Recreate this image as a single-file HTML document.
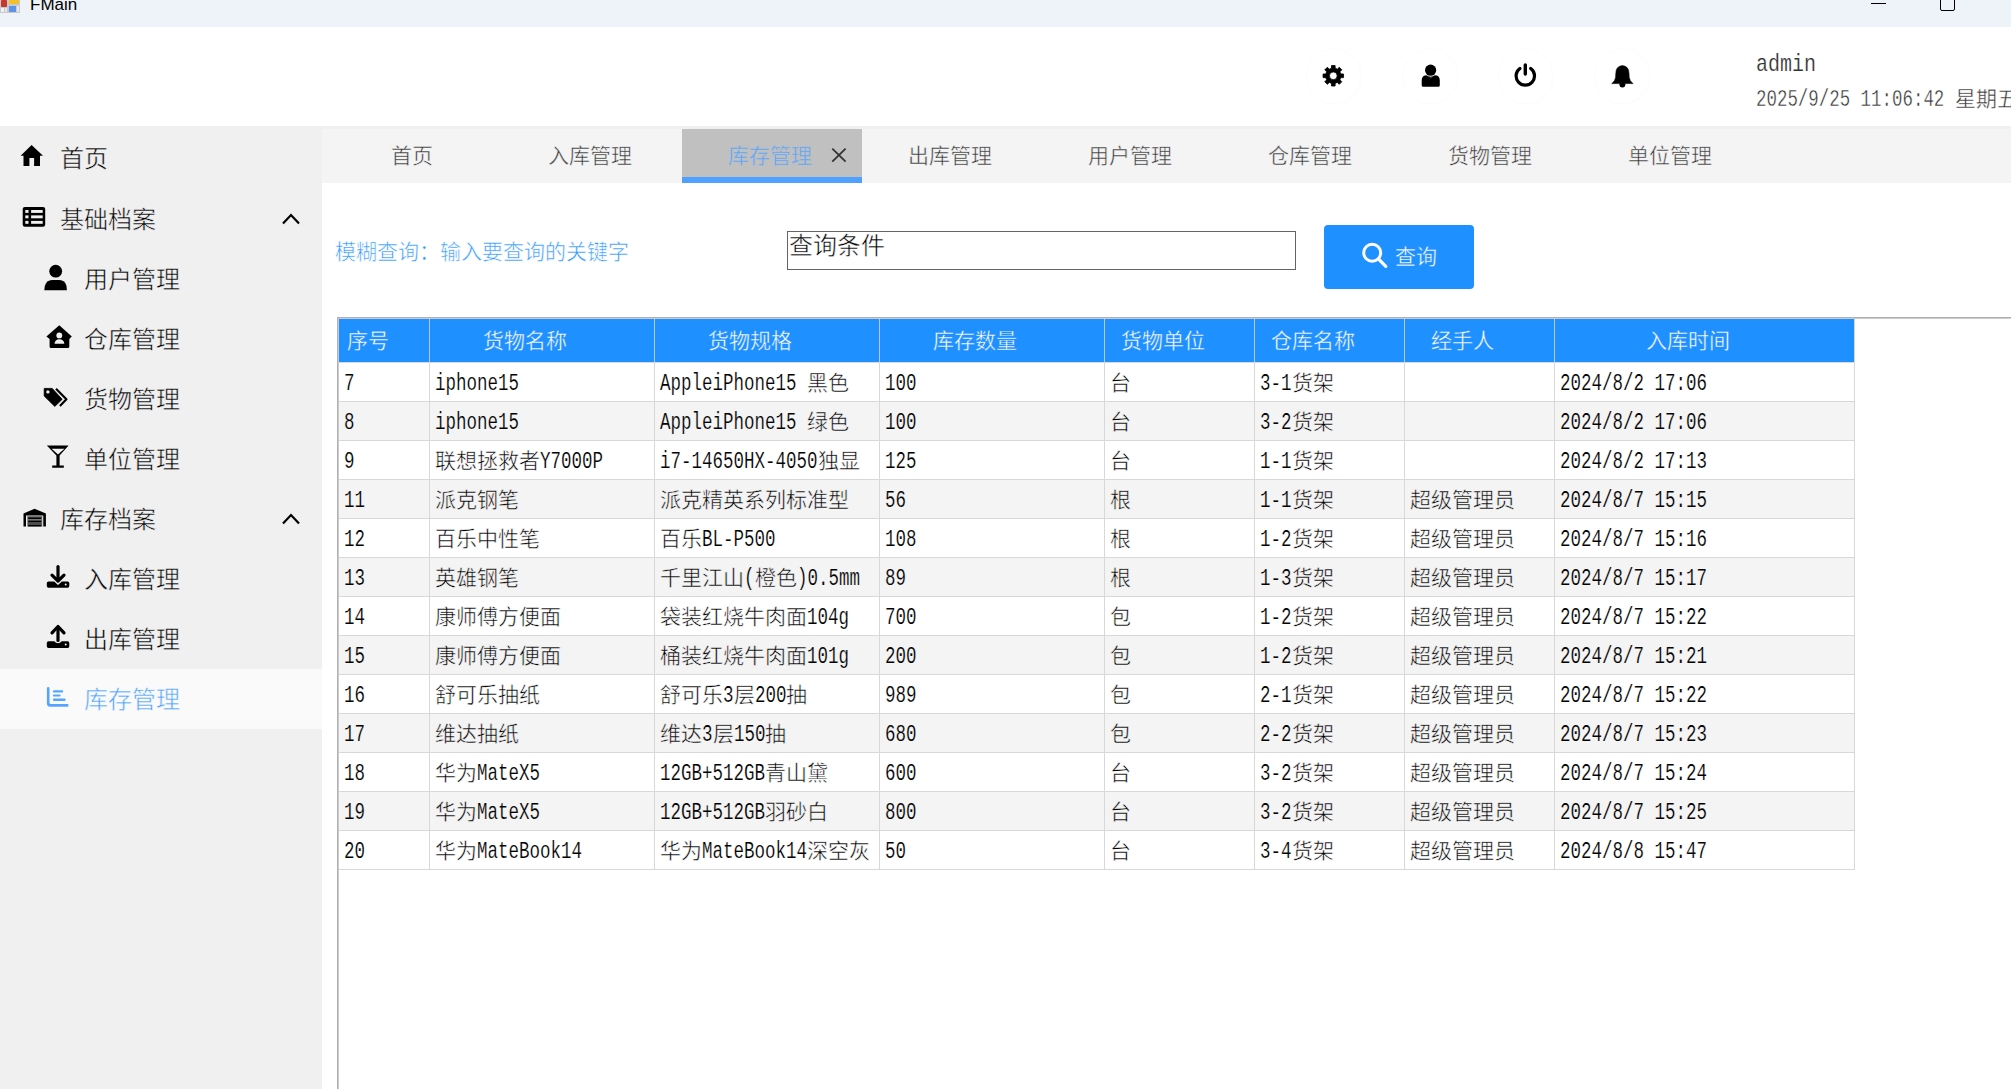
<!DOCTYPE html>
<html lang="zh-CN"><head><meta charset="utf-8"><title>FMain</title><style>
*{margin:0;padding:0;box-sizing:border-box}
html,body{width:2011px;height:1089px;overflow:hidden;background:#fff}
body{position:relative;font-family:"Liberation Sans",sans-serif;color:#000}
.abs{position:absolute}
.t{position:absolute;white-space:nowrap;line-height:1}
.a{display:inline-block;transform:scaleX(.7609);transform-origin:0 0;white-space:pre;font-size:23px;-webkit-text-stroke-width:.2px}
.cell{position:absolute;white-space:nowrap;height:39px;line-height:39px;font-family:"Liberation Mono",monospace;font-size:21px;color:#000;overflow:visible}
.hd{position:absolute;white-space:nowrap;line-height:1;font-size:21px;color:#fff;font-family:"Liberation Sans",sans-serif;-webkit-text-stroke:.4px #1e90ff}
</style></head>
<body>
<div class="abs" style="left:0;top:0;width:2011px;height:27px;background:#eef2f9"></div>
<div class="abs" style="left:0;top:0;width:20px;height:13px;background:#c9c9cb"></div>
<div class="abs" style="left:1px;top:0;width:6px;height:7px;background:#c8362c;border-radius:1px"></div>
<div class="abs" style="left:9px;top:0;width:10px;height:4px;background:#f2c12e"></div>
<div class="abs" style="left:9px;top:6px;width:7px;height:6px;background:#5d93e6"></div>
<div class="abs" style="left:1px;top:8px;width:3px;height:4px;background:#eef1f5"></div>
<div class="abs" style="left:5px;top:8px;width:2px;height:4px;background:#e4e7ec"></div>
<div class="abs" style="left:17px;top:6px;width:2px;height:6px;background:#e4e7ec"></div>
<div class="t" style="left:30px;top:-4px;font-size:17px;color:#000">FMain</div>
<div class="abs" style="left:1871px;top:3px;width:15px;height:1px;background:#000"></div>
<div class="abs" style="left:1940px;top:-4px;width:15px;height:15px;border:1px solid #000;border-radius:2px"></div>
<div class="abs" style="left:0;top:126px;width:322px;height:963px;background:#f0f0f0"></div>
<div class="abs" style="left:0;top:669px;width:322px;height:60px;background:#fafafa"></div>
<div class="t" style="left:60px;top:147px;font-size:24px;color:#000;-webkit-text-stroke:.5px #f0f0f0">首页</div>
<div class="t" style="left:60px;top:208px;font-size:24px;color:#000;-webkit-text-stroke:.5px #f0f0f0">基础档案</div>
<div class="t" style="left:84px;top:268px;font-size:24px;color:#000;-webkit-text-stroke:.5px #f0f0f0">用户管理</div>
<div class="t" style="left:84px;top:328px;font-size:24px;color:#000;-webkit-text-stroke:.5px #f0f0f0">仓库管理</div>
<div class="t" style="left:84px;top:388px;font-size:24px;color:#000;-webkit-text-stroke:.5px #f0f0f0">货物管理</div>
<div class="t" style="left:84px;top:448px;font-size:24px;color:#000;-webkit-text-stroke:.5px #f0f0f0">单位管理</div>
<div class="t" style="left:60px;top:508px;font-size:24px;color:#000;-webkit-text-stroke:.5px #f0f0f0">库存档案</div>
<div class="t" style="left:84px;top:568px;font-size:24px;color:#000;-webkit-text-stroke:.5px #f0f0f0">入库管理</div>
<div class="t" style="left:84px;top:628px;font-size:24px;color:#000;-webkit-text-stroke:.5px #f0f0f0">出库管理</div>
<div class="t" style="left:84px;top:688px;font-size:24px;color:#55a5ff;-webkit-text-stroke:.5px #fafafa">库存管理</div>
<div class="abs" style="left:322px;top:126px;width:1689px;height:3px;background:#f0f0f0"></div>
<div class="abs" style="left:322px;top:129px;width:1689px;height:54px;background:#f4f4f4"></div>
<div class="abs" style="left:682px;top:129px;width:180px;height:54px;background:#c0c0c0"></div>
<div class="abs" style="left:682px;top:177px;width:180px;height:6px;background:#50a0ff"></div>
<div class="t" style="left:390.5px;top:145px;font-size:21px;color:#333;-webkit-text-stroke:.5px #f4f4f4">首页</div>
<div class="t" style="left:548.3px;top:145px;font-size:21px;color:#333;-webkit-text-stroke:.5px #f4f4f4">入库管理</div>
<div class="t" style="left:728.3px;top:145px;font-size:21px;color:#55a5ff;-webkit-text-stroke:.5px #c0c0c0">库存管理</div>
<div class="t" style="left:908.3px;top:145px;font-size:21px;color:#333;-webkit-text-stroke:.5px #f4f4f4">出库管理</div>
<div class="t" style="left:1088.3px;top:145px;font-size:21px;color:#333;-webkit-text-stroke:.5px #f4f4f4">用户管理</div>
<div class="t" style="left:1268.3px;top:145px;font-size:21px;color:#333;-webkit-text-stroke:.5px #f4f4f4">仓库管理</div>
<div class="t" style="left:1448.3px;top:145px;font-size:21px;color:#333;-webkit-text-stroke:.5px #f4f4f4">货物管理</div>
<div class="t" style="left:1628.3px;top:145px;font-size:21px;color:#333;-webkit-text-stroke:.5px #f4f4f4">单位管理</div>
<div class="t" style="left:335px;top:241px;font-size:21px;color:#3399ff;-webkit-text-stroke:.5px #fff">模糊查询：输入要查询的关键字</div>
<div class="abs" style="left:787px;top:231px;width:509px;height:39px;border:1px solid #646464;background:#fff"></div>
<div class="t" style="left:789px;top:234px;font-size:24px;color:#000;-webkit-text-stroke:.5px #fff">查询条件</div>
<div class="abs" style="left:1324px;top:225px;width:150px;height:64px;background:#1e90ff;border-radius:4px"></div>
<div class="t" style="left:1395px;top:246px;font-size:21px;color:#fff;-webkit-text-stroke:.4px #1e90ff">查询</div>
<div class="abs" style="left:337px;top:317px;width:1674px;height:2px;background:#c9cace"></div>
<div class="abs" style="left:337px;top:317px;width:2px;height:772px;background:#c9cace"></div>
<div class="abs" style="left:337px;top:316.5px;width:1674px;height:1.5px;background:#b0b0b6"></div>
<div class="abs" style="left:337px;top:317px;width:1px;height:772px;background:#b0b0b6"></div>
<div class="abs" style="left:339px;top:319px;width:1515px;height:43px;background:#1e90ff"></div>
<div class="abs" style="left:339px;top:363px;width:1515px;height:38px;background:#fff"></div>
<div class="abs" style="left:339px;top:401px;width:1516px;height:1px;background:#d8d8d8"></div>
<div class="abs" style="left:339px;top:402px;width:1515px;height:38px;background:#f4f4f4"></div>
<div class="abs" style="left:339px;top:440px;width:1516px;height:1px;background:#d8d8d8"></div>
<div class="abs" style="left:339px;top:441px;width:1515px;height:38px;background:#fff"></div>
<div class="abs" style="left:339px;top:479px;width:1516px;height:1px;background:#d8d8d8"></div>
<div class="abs" style="left:339px;top:480px;width:1515px;height:38px;background:#f4f4f4"></div>
<div class="abs" style="left:339px;top:518px;width:1516px;height:1px;background:#d8d8d8"></div>
<div class="abs" style="left:339px;top:519px;width:1515px;height:38px;background:#fff"></div>
<div class="abs" style="left:339px;top:557px;width:1516px;height:1px;background:#d8d8d8"></div>
<div class="abs" style="left:339px;top:558px;width:1515px;height:38px;background:#f4f4f4"></div>
<div class="abs" style="left:339px;top:596px;width:1516px;height:1px;background:#d8d8d8"></div>
<div class="abs" style="left:339px;top:597px;width:1515px;height:38px;background:#fff"></div>
<div class="abs" style="left:339px;top:635px;width:1516px;height:1px;background:#d8d8d8"></div>
<div class="abs" style="left:339px;top:636px;width:1515px;height:38px;background:#f4f4f4"></div>
<div class="abs" style="left:339px;top:674px;width:1516px;height:1px;background:#d8d8d8"></div>
<div class="abs" style="left:339px;top:675px;width:1515px;height:38px;background:#fff"></div>
<div class="abs" style="left:339px;top:713px;width:1516px;height:1px;background:#d8d8d8"></div>
<div class="abs" style="left:339px;top:714px;width:1515px;height:38px;background:#f4f4f4"></div>
<div class="abs" style="left:339px;top:752px;width:1516px;height:1px;background:#d8d8d8"></div>
<div class="abs" style="left:339px;top:753px;width:1515px;height:38px;background:#fff"></div>
<div class="abs" style="left:339px;top:791px;width:1516px;height:1px;background:#d8d8d8"></div>
<div class="abs" style="left:339px;top:792px;width:1515px;height:38px;background:#f4f4f4"></div>
<div class="abs" style="left:339px;top:830px;width:1516px;height:1px;background:#d8d8d8"></div>
<div class="abs" style="left:339px;top:831px;width:1515px;height:38px;background:#fff"></div>
<div class="abs" style="left:339px;top:869px;width:1516px;height:1px;background:#d8d8d8"></div>
<div class="abs" style="left:339px;top:362px;width:1516px;height:1px;background:#dcdad6"></div>
<div class="abs" style="left:429px;top:319px;width:1px;height:551px;background:#d8d8d8"></div>
<div class="abs" style="left:654px;top:319px;width:1px;height:551px;background:#d8d8d8"></div>
<div class="abs" style="left:879px;top:319px;width:1px;height:551px;background:#d8d8d8"></div>
<div class="abs" style="left:1104px;top:319px;width:1px;height:551px;background:#d8d8d8"></div>
<div class="abs" style="left:1254px;top:319px;width:1px;height:551px;background:#d8d8d8"></div>
<div class="abs" style="left:1404px;top:319px;width:1px;height:551px;background:#d8d8d8"></div>
<div class="abs" style="left:1554px;top:319px;width:1px;height:551px;background:#d8d8d8"></div>
<div class="abs" style="left:1854px;top:319px;width:1px;height:551px;background:#d8d8d8"></div>
<div class="abs" style="left:429px;top:319px;width:1px;height:43px;background:#b9c9dc"></div>
<div class="abs" style="left:654px;top:319px;width:1px;height:43px;background:#b9c9dc"></div>
<div class="abs" style="left:879px;top:319px;width:1px;height:43px;background:#b9c9dc"></div>
<div class="abs" style="left:1104px;top:319px;width:1px;height:43px;background:#b9c9dc"></div>
<div class="abs" style="left:1254px;top:319px;width:1px;height:43px;background:#b9c9dc"></div>
<div class="abs" style="left:1404px;top:319px;width:1px;height:43px;background:#b9c9dc"></div>
<div class="abs" style="left:1554px;top:319px;width:1px;height:43px;background:#b9c9dc"></div>
<div class="hd" style="left:347.0px;top:330px">序号</div>
<div class="hd" style="left:483.0px;top:330px">货物名称</div>
<div class="hd" style="left:708.0px;top:330px">货物规格</div>
<div class="hd" style="left:933.0px;top:330px">库存数量</div>
<div class="hd" style="left:1120.5px;top:330px">货物单位</div>
<div class="hd" style="left:1270.5px;top:330px">仓库名称</div>
<div class="hd" style="left:1431.0px;top:330px">经手人</div>
<div class="hd" style="left:1645.5px;top:330px">入库时间</div>
<div class="cell" style="left:344px;top:365px;-webkit-text-stroke:.5px #fff"><span class="a" style="margin-right:-3.30px">7</span></div>
<div class="cell" style="left:435px;top:365px;-webkit-text-stroke:.5px #fff"><span class="a" style="margin-right:-26.40px">iphone15</span></div>
<div class="cell" style="left:660px;top:365px;-webkit-text-stroke:.5px #fff"><span class="a" style="margin-right:-46.19px">AppleiPhone15 </span>黑色</div>
<div class="cell" style="left:885px;top:365px;-webkit-text-stroke:.5px #fff"><span class="a" style="margin-right:-9.90px">100</span></div>
<div class="cell" style="left:1110px;top:365px;-webkit-text-stroke:.5px #fff">台</div>
<div class="cell" style="left:1260px;top:365px;-webkit-text-stroke:.5px #fff"><span class="a" style="margin-right:-9.90px">3-1</span>货架</div>
<div class="cell" style="left:1560px;top:365px;-webkit-text-stroke:.5px #fff"><span class="a" style="margin-right:-46.19px">2024/8/2 17:06</span></div>
<div class="cell" style="left:344px;top:404px;-webkit-text-stroke:.5px #f4f4f4"><span class="a" style="margin-right:-3.30px">8</span></div>
<div class="cell" style="left:435px;top:404px;-webkit-text-stroke:.5px #f4f4f4"><span class="a" style="margin-right:-26.40px">iphone15</span></div>
<div class="cell" style="left:660px;top:404px;-webkit-text-stroke:.5px #f4f4f4"><span class="a" style="margin-right:-46.19px">AppleiPhone15 </span>绿色</div>
<div class="cell" style="left:885px;top:404px;-webkit-text-stroke:.5px #f4f4f4"><span class="a" style="margin-right:-9.90px">100</span></div>
<div class="cell" style="left:1110px;top:404px;-webkit-text-stroke:.5px #f4f4f4">台</div>
<div class="cell" style="left:1260px;top:404px;-webkit-text-stroke:.5px #f4f4f4"><span class="a" style="margin-right:-9.90px">3-2</span>货架</div>
<div class="cell" style="left:1560px;top:404px;-webkit-text-stroke:.5px #f4f4f4"><span class="a" style="margin-right:-46.19px">2024/8/2 17:06</span></div>
<div class="cell" style="left:344px;top:443px;-webkit-text-stroke:.5px #fff"><span class="a" style="margin-right:-3.30px">9</span></div>
<div class="cell" style="left:435px;top:443px;-webkit-text-stroke:.5px #fff">联想拯救者<span class="a" style="margin-right:-19.80px">Y7000P</span></div>
<div class="cell" style="left:660px;top:443px;-webkit-text-stroke:.5px #fff"><span class="a" style="margin-right:-49.49px">i7-14650HX-4050</span>独显</div>
<div class="cell" style="left:885px;top:443px;-webkit-text-stroke:.5px #fff"><span class="a" style="margin-right:-9.90px">125</span></div>
<div class="cell" style="left:1110px;top:443px;-webkit-text-stroke:.5px #fff">台</div>
<div class="cell" style="left:1260px;top:443px;-webkit-text-stroke:.5px #fff"><span class="a" style="margin-right:-9.90px">1-1</span>货架</div>
<div class="cell" style="left:1560px;top:443px;-webkit-text-stroke:.5px #fff"><span class="a" style="margin-right:-46.19px">2024/8/2 17:13</span></div>
<div class="cell" style="left:344px;top:482px;-webkit-text-stroke:.5px #f4f4f4"><span class="a" style="margin-right:-6.60px">11</span></div>
<div class="cell" style="left:435px;top:482px;-webkit-text-stroke:.5px #f4f4f4">派克钢笔</div>
<div class="cell" style="left:660px;top:482px;-webkit-text-stroke:.5px #f4f4f4">派克精英系列标准型</div>
<div class="cell" style="left:885px;top:482px;-webkit-text-stroke:.5px #f4f4f4"><span class="a" style="margin-right:-6.60px">56</span></div>
<div class="cell" style="left:1110px;top:482px;-webkit-text-stroke:.5px #f4f4f4">根</div>
<div class="cell" style="left:1260px;top:482px;-webkit-text-stroke:.5px #f4f4f4"><span class="a" style="margin-right:-9.90px">1-1</span>货架</div>
<div class="cell" style="left:1410px;top:482px;-webkit-text-stroke:.5px #f4f4f4">超级管理员</div>
<div class="cell" style="left:1560px;top:482px;-webkit-text-stroke:.5px #f4f4f4"><span class="a" style="margin-right:-46.19px">2024/8/7 15:15</span></div>
<div class="cell" style="left:344px;top:521px;-webkit-text-stroke:.5px #fff"><span class="a" style="margin-right:-6.60px">12</span></div>
<div class="cell" style="left:435px;top:521px;-webkit-text-stroke:.5px #fff">百乐中性笔</div>
<div class="cell" style="left:660px;top:521px;-webkit-text-stroke:.5px #fff">百乐<span class="a" style="margin-right:-23.10px">BL-P500</span></div>
<div class="cell" style="left:885px;top:521px;-webkit-text-stroke:.5px #fff"><span class="a" style="margin-right:-9.90px">108</span></div>
<div class="cell" style="left:1110px;top:521px;-webkit-text-stroke:.5px #fff">根</div>
<div class="cell" style="left:1260px;top:521px;-webkit-text-stroke:.5px #fff"><span class="a" style="margin-right:-9.90px">1-2</span>货架</div>
<div class="cell" style="left:1410px;top:521px;-webkit-text-stroke:.5px #fff">超级管理员</div>
<div class="cell" style="left:1560px;top:521px;-webkit-text-stroke:.5px #fff"><span class="a" style="margin-right:-46.19px">2024/8/7 15:16</span></div>
<div class="cell" style="left:344px;top:560px;-webkit-text-stroke:.5px #f4f4f4"><span class="a" style="margin-right:-6.60px">13</span></div>
<div class="cell" style="left:435px;top:560px;-webkit-text-stroke:.5px #f4f4f4">英雄钢笔</div>
<div class="cell" style="left:660px;top:560px;-webkit-text-stroke:.5px #f4f4f4">千里江山<span class="a" style="margin-right:-3.30px">(</span>橙色<span class="a" style="margin-right:-19.80px">)0.5mm</span></div>
<div class="cell" style="left:885px;top:560px;-webkit-text-stroke:.5px #f4f4f4"><span class="a" style="margin-right:-6.60px">89</span></div>
<div class="cell" style="left:1110px;top:560px;-webkit-text-stroke:.5px #f4f4f4">根</div>
<div class="cell" style="left:1260px;top:560px;-webkit-text-stroke:.5px #f4f4f4"><span class="a" style="margin-right:-9.90px">1-3</span>货架</div>
<div class="cell" style="left:1410px;top:560px;-webkit-text-stroke:.5px #f4f4f4">超级管理员</div>
<div class="cell" style="left:1560px;top:560px;-webkit-text-stroke:.5px #f4f4f4"><span class="a" style="margin-right:-46.19px">2024/8/7 15:17</span></div>
<div class="cell" style="left:344px;top:599px;-webkit-text-stroke:.5px #fff"><span class="a" style="margin-right:-6.60px">14</span></div>
<div class="cell" style="left:435px;top:599px;-webkit-text-stroke:.5px #fff">康师傅方便面</div>
<div class="cell" style="left:660px;top:599px;-webkit-text-stroke:.5px #fff">袋装红烧牛肉面<span class="a" style="margin-right:-13.20px">104g</span></div>
<div class="cell" style="left:885px;top:599px;-webkit-text-stroke:.5px #fff"><span class="a" style="margin-right:-9.90px">700</span></div>
<div class="cell" style="left:1110px;top:599px;-webkit-text-stroke:.5px #fff">包</div>
<div class="cell" style="left:1260px;top:599px;-webkit-text-stroke:.5px #fff"><span class="a" style="margin-right:-9.90px">1-2</span>货架</div>
<div class="cell" style="left:1410px;top:599px;-webkit-text-stroke:.5px #fff">超级管理员</div>
<div class="cell" style="left:1560px;top:599px;-webkit-text-stroke:.5px #fff"><span class="a" style="margin-right:-46.19px">2024/8/7 15:22</span></div>
<div class="cell" style="left:344px;top:638px;-webkit-text-stroke:.5px #f4f4f4"><span class="a" style="margin-right:-6.60px">15</span></div>
<div class="cell" style="left:435px;top:638px;-webkit-text-stroke:.5px #f4f4f4">康师傅方便面</div>
<div class="cell" style="left:660px;top:638px;-webkit-text-stroke:.5px #f4f4f4">桶装红烧牛肉面<span class="a" style="margin-right:-13.20px">101g</span></div>
<div class="cell" style="left:885px;top:638px;-webkit-text-stroke:.5px #f4f4f4"><span class="a" style="margin-right:-9.90px">200</span></div>
<div class="cell" style="left:1110px;top:638px;-webkit-text-stroke:.5px #f4f4f4">包</div>
<div class="cell" style="left:1260px;top:638px;-webkit-text-stroke:.5px #f4f4f4"><span class="a" style="margin-right:-9.90px">1-2</span>货架</div>
<div class="cell" style="left:1410px;top:638px;-webkit-text-stroke:.5px #f4f4f4">超级管理员</div>
<div class="cell" style="left:1560px;top:638px;-webkit-text-stroke:.5px #f4f4f4"><span class="a" style="margin-right:-46.19px">2024/8/7 15:21</span></div>
<div class="cell" style="left:344px;top:677px;-webkit-text-stroke:.5px #fff"><span class="a" style="margin-right:-6.60px">16</span></div>
<div class="cell" style="left:435px;top:677px;-webkit-text-stroke:.5px #fff">舒可乐抽纸</div>
<div class="cell" style="left:660px;top:677px;-webkit-text-stroke:.5px #fff">舒可乐<span class="a" style="margin-right:-3.30px">3</span>层<span class="a" style="margin-right:-9.90px">200</span>抽</div>
<div class="cell" style="left:885px;top:677px;-webkit-text-stroke:.5px #fff"><span class="a" style="margin-right:-9.90px">989</span></div>
<div class="cell" style="left:1110px;top:677px;-webkit-text-stroke:.5px #fff">包</div>
<div class="cell" style="left:1260px;top:677px;-webkit-text-stroke:.5px #fff"><span class="a" style="margin-right:-9.90px">2-1</span>货架</div>
<div class="cell" style="left:1410px;top:677px;-webkit-text-stroke:.5px #fff">超级管理员</div>
<div class="cell" style="left:1560px;top:677px;-webkit-text-stroke:.5px #fff"><span class="a" style="margin-right:-46.19px">2024/8/7 15:22</span></div>
<div class="cell" style="left:344px;top:716px;-webkit-text-stroke:.5px #f4f4f4"><span class="a" style="margin-right:-6.60px">17</span></div>
<div class="cell" style="left:435px;top:716px;-webkit-text-stroke:.5px #f4f4f4">维达抽纸</div>
<div class="cell" style="left:660px;top:716px;-webkit-text-stroke:.5px #f4f4f4">维达<span class="a" style="margin-right:-3.30px">3</span>层<span class="a" style="margin-right:-9.90px">150</span>抽</div>
<div class="cell" style="left:885px;top:716px;-webkit-text-stroke:.5px #f4f4f4"><span class="a" style="margin-right:-9.90px">680</span></div>
<div class="cell" style="left:1110px;top:716px;-webkit-text-stroke:.5px #f4f4f4">包</div>
<div class="cell" style="left:1260px;top:716px;-webkit-text-stroke:.5px #f4f4f4"><span class="a" style="margin-right:-9.90px">2-2</span>货架</div>
<div class="cell" style="left:1410px;top:716px;-webkit-text-stroke:.5px #f4f4f4">超级管理员</div>
<div class="cell" style="left:1560px;top:716px;-webkit-text-stroke:.5px #f4f4f4"><span class="a" style="margin-right:-46.19px">2024/8/7 15:23</span></div>
<div class="cell" style="left:344px;top:755px;-webkit-text-stroke:.5px #fff"><span class="a" style="margin-right:-6.60px">18</span></div>
<div class="cell" style="left:435px;top:755px;-webkit-text-stroke:.5px #fff">华为<span class="a" style="margin-right:-19.80px">MateX5</span></div>
<div class="cell" style="left:660px;top:755px;-webkit-text-stroke:.5px #fff"><span class="a" style="margin-right:-33.00px">12GB+512GB</span>青山黛</div>
<div class="cell" style="left:885px;top:755px;-webkit-text-stroke:.5px #fff"><span class="a" style="margin-right:-9.90px">600</span></div>
<div class="cell" style="left:1110px;top:755px;-webkit-text-stroke:.5px #fff">台</div>
<div class="cell" style="left:1260px;top:755px;-webkit-text-stroke:.5px #fff"><span class="a" style="margin-right:-9.90px">3-2</span>货架</div>
<div class="cell" style="left:1410px;top:755px;-webkit-text-stroke:.5px #fff">超级管理员</div>
<div class="cell" style="left:1560px;top:755px;-webkit-text-stroke:.5px #fff"><span class="a" style="margin-right:-46.19px">2024/8/7 15:24</span></div>
<div class="cell" style="left:344px;top:794px;-webkit-text-stroke:.5px #f4f4f4"><span class="a" style="margin-right:-6.60px">19</span></div>
<div class="cell" style="left:435px;top:794px;-webkit-text-stroke:.5px #f4f4f4">华为<span class="a" style="margin-right:-19.80px">MateX5</span></div>
<div class="cell" style="left:660px;top:794px;-webkit-text-stroke:.5px #f4f4f4"><span class="a" style="margin-right:-33.00px">12GB+512GB</span>羽砂白</div>
<div class="cell" style="left:885px;top:794px;-webkit-text-stroke:.5px #f4f4f4"><span class="a" style="margin-right:-9.90px">800</span></div>
<div class="cell" style="left:1110px;top:794px;-webkit-text-stroke:.5px #f4f4f4">台</div>
<div class="cell" style="left:1260px;top:794px;-webkit-text-stroke:.5px #f4f4f4"><span class="a" style="margin-right:-9.90px">3-2</span>货架</div>
<div class="cell" style="left:1410px;top:794px;-webkit-text-stroke:.5px #f4f4f4">超级管理员</div>
<div class="cell" style="left:1560px;top:794px;-webkit-text-stroke:.5px #f4f4f4"><span class="a" style="margin-right:-46.19px">2024/8/7 15:25</span></div>
<div class="cell" style="left:344px;top:833px;-webkit-text-stroke:.5px #fff"><span class="a" style="margin-right:-6.60px">20</span></div>
<div class="cell" style="left:435px;top:833px;-webkit-text-stroke:.5px #fff">华为<span class="a" style="margin-right:-33.00px">MateBook14</span></div>
<div class="cell" style="left:660px;top:833px;-webkit-text-stroke:.5px #fff">华为<span class="a" style="margin-right:-33.00px">MateBook14</span>深空灰</div>
<div class="cell" style="left:885px;top:833px;-webkit-text-stroke:.5px #fff"><span class="a" style="margin-right:-6.60px">50</span></div>
<div class="cell" style="left:1110px;top:833px;-webkit-text-stroke:.5px #fff">台</div>
<div class="cell" style="left:1260px;top:833px;-webkit-text-stroke:.5px #fff"><span class="a" style="margin-right:-9.90px">3-4</span>货架</div>
<div class="cell" style="left:1410px;top:833px;-webkit-text-stroke:.5px #fff">超级管理员</div>
<div class="cell" style="left:1560px;top:833px;-webkit-text-stroke:.5px #fff"><span class="a" style="margin-right:-46.19px">2024/8/8 15:47</span></div>
<div class="cell" style="left:1756px;top:45px;font-size:24px;color:#333;-webkit-text-stroke:.4px #fff"><span class="a" style="margin-right:-12.00px;transform:scaleX(0.8333);font-size:24px">admin</span></div>
<div class="cell" style="left:1756px;top:81px;color:#333;font-size:23px;-webkit-text-stroke:.4px #fff"><span style="display:inline-block;transform:scaleX(.758);transform-origin:0 0;white-space:pre;margin-right:-63.45px">2025/9/25 11:06:42 </span><span style="font-size:21px">星期五</span></div>
<svg class="abs" style="left:0;top:0" width="2011" height="1089" viewBox="0 0 2011 1089">
<!-- faint circles --><circle cx="1333.7" cy="76.4" r="27.5" fill="none" stroke="#fcfcfc" stroke-width="1"/><circle cx="1430.7" cy="76.4" r="27.5" fill="none" stroke="#fcfcfc" stroke-width="1"/><circle cx="1525.6" cy="76.4" r="27.5" fill="none" stroke="#fcfcfc" stroke-width="1"/><circle cx="1622.4" cy="76.4" r="27.5" fill="none" stroke="#fcfcfc" stroke-width="1"/>
<!-- home -->
<path d="M31.6 145 L20.6 155.8 L23.5 155.8 L23.5 166 L29.4 166 L29.4 158 L34.1 158 L34.1 166 L40 166 L40 155.8 L43 155.8 Z" fill="#000"/>
<!-- list -->
<rect x="22.7" y="206.9" width="22.5" height="19.8" rx="2.2" fill="#000"/>
<g fill="#f0f0f0">
<rect x="25.3" y="210" width="3.2" height="2.9"/><rect x="31.1" y="210" width="11.6" height="2.9"/>
<rect x="25.3" y="215.4" width="3.2" height="2.9"/><rect x="31.1" y="215.4" width="11.6" height="2.9"/>
<rect x="25.3" y="220.9" width="3.2" height="2.9"/><rect x="31.1" y="220.9" width="11.6" height="2.9"/>
</g>
<!-- chevrons -->
<path d="M283 223.5 L291 215 L299 223.5" fill="none" stroke="#000" stroke-width="2.2"/>
<path d="M283 523.5 L291 515 L299 523.5" fill="none" stroke="#000" stroke-width="2.2"/>
<!-- user -->
<circle cx="55.7" cy="271.2" r="6.4" fill="#000"/>
<path d="M44.3 290.2 L44.8 286 Q46.5 280 52 279.9 L59.5 279.9 Q65 280 66.5 286 L66.9 290.2 Z" fill="#000"/>
<!-- house-user -->
<path d="M59.3 325.3 L46.4 336.4 L49.6 339 L49.6 346.5 Q49.6 348 51 348 L68 348 Q69.3 348 69.3 346.5 L69.3 339 L71.8 336.4 Z" fill="#000"/>
<circle cx="59.3" cy="335.4" r="2.9" fill="#f0f0f0"/>
<path d="M54.5 343.8 Q55 339.3 59.3 339.3 Q63.8 339.3 64.4 343.8 Z" fill="#f0f0f0"/>
<!-- tags -->
<path d="M44.2 388.4 L52.2 388.4 L62.2 399.3 L54.8 406.4 L44.2 396 Z" fill="#000" stroke="#000" stroke-width="0.8" stroke-linejoin="round"/>
<circle cx="47.9" cy="391.9" r="1.7" fill="#f0f0f0"/>
<path d="M56 388.7 L66.4 399.3 L59.9 406" fill="none" stroke="#000" stroke-width="2.2" stroke-linejoin="round"/>
<!-- cocktail -->
<path d="M46.8 445.5 L68.6 445.5 L59.6 455.5 L59.6 465.4 L63.8 465.4 L63.8 467.7 L52.2 467.7 L52.2 465.4 L56.4 465.4 L56.4 455.5 Z M51.6 448.7 L58 454.6 L64.4 448.7 Z" fill="#000" fill-rule="evenodd"/>
<!-- warehouse -->
<path d="M34.6 508.7 L23.5 513.5 L23.5 526.4 L26 526.4 L26 515.6 L43.3 515.6 L43.3 526.4 L45.9 526.4 L45.9 513.5 Z" fill="#000"/>
<rect x="27.2" y="515.7" width="15.1" height="10.9" fill="#777"/>
<g fill="#000"><rect x="28.2" y="517.4" width="13.2" height="1.6"/><rect x="28.2" y="520.6" width="13.2" height="1.6"/><rect x="28.2" y="524.8" width="13.2" height="1.6"/></g>
<rect x="28.2" y="522.2" width="13.2" height="2.6" fill="#4a4a4a"/>
<!-- download -->
<path d="M58 566.5 L58 579" stroke="#000" stroke-width="3.2" stroke-linecap="round"/>
<path d="M52 575.2 L58 581 L64 575.2" fill="none" stroke="#000" stroke-width="3.2" stroke-linecap="round" stroke-linejoin="round"/>
<path d="M48.5 581.5 L54.2 581.5 L58 585 L61.8 581.5 L67.7 581.5 Q69.3 581.5 69.3 583.2 L69.3 586 Q69.3 587.7 67.7 587.7 L48.5 587.7 Q46.8 587.7 46.8 586 L46.8 583.2 Q46.8 581.5 48.5 581.5 Z" fill="#000"/>
<circle cx="65.7" cy="584.6" r="1" fill="#f0f0f0"/>
<!-- upload -->
<path d="M58 628 L58 640.5" stroke="#000" stroke-width="3.2" stroke-linecap="round"/>
<path d="M52 632.8 L58 626.5 L64 632.8" fill="none" stroke="#000" stroke-width="3.2" stroke-linecap="round" stroke-linejoin="round"/>
<path d="M48.5 641.3 L54.2 641.3 Q58 645 61.8 641.3 L67.7 641.3 Q69.3 641.3 69.3 643 L69.3 646.3 Q69.3 648 67.7 648 L48.5 648 Q46.8 648 46.8 646.3 L46.8 643 Q46.8 641.3 48.5 641.3 Z" fill="#000"/>
<circle cx="65.7" cy="644.6" r="1" fill="#f0f0f0"/>
<!-- chart -->
<g fill="#55a5ff">
<path d="M46.9 688.4 Q46.9 687.1 48.2 687.1 Q49.5 687.1 49.5 688.4 L49.5 702.5 Q49.5 704.1 51 704.1 L67.3 704.1 Q68.6 704.1 68.6 705.4 Q68.6 706.7 67.3 706.7 L50 706.7 Q46.9 706.7 46.9 703.6 Z"/>
<rect x="52.9" y="690.3" width="10.3" height="2.2" rx="1.1"/>
<rect x="52.9" y="694.5" width="7.7" height="2" rx="1"/>
<rect x="52.9" y="698.6" width="12.8" height="2.3" rx="1.1"/>
</g>
<!-- tab close X -->
<path d="M832.3 148.6 L845.6 161.7 M845.6 148.6 L832.3 161.7" stroke="#333" stroke-width="1.8"/>
<!-- search icon -->
<circle cx="1372.2" cy="252.7" r="8.5" fill="none" stroke="#fff" stroke-width="3"/>
<path d="M1379 259.5 L1385.8 266.3" stroke="#fff" stroke-width="3.2" stroke-linecap="round"/>
<!-- gear -->
<g transform="translate(1333.3 75.8)"><path d="M-1.86 -7.47 L-1.81 -10.24 L1.81 -10.24 L1.86 -7.47 A7.7 7.7 0 0 1 3.97 -6.60 L5.97 -8.52 L8.52 -5.97 L6.60 -3.97 A7.7 7.7 0 0 1 7.47 -1.86 L10.24 -1.81 L10.24 1.81 L7.47 1.86 A7.7 7.7 0 0 1 6.60 3.97 L8.52 5.97 L5.97 8.52 L3.97 6.60 A7.7 7.7 0 0 1 1.86 7.47 L1.81 10.24 L-1.81 10.24 L-1.86 7.47 A7.7 7.7 0 0 1 -3.97 6.60 L-5.97 8.52 L-8.52 5.97 L-6.60 3.97 A7.7 7.7 0 0 1 -7.47 1.86 L-10.24 1.81 L-10.24 -1.81 L-7.47 -1.86 A7.7 7.7 0 0 1 -6.60 -3.97 L-8.52 -5.97 L-5.97 -8.52 L-3.97 -6.60 A7.7 7.7 0 0 1 -1.86 -7.47 Z M3.9 0 A3.9 3.9 0 1 0 -3.9 0 A3.9 3.9 0 1 0 3.9 0 Z" fill-rule="evenodd" fill="#000" stroke="#000" stroke-width="0.8" stroke-linejoin="round"/></g>
<!-- user header -->
<path d="M1421.7 86.7 L1421.7 80.5 Q1421.7 75.2 1426.8 75.2 L1434.7 75.2 Q1439.8 75.2 1439.8 80.5 L1439.8 85.2 Q1439.8 86.7 1438.3 86.7 L1423.2 86.7 Q1421.7 86.7 1421.7 85.2 Z" fill="#000"/>
<circle cx="1430.6" cy="70.2" r="6.5" fill="#fff"/>
<circle cx="1430.6" cy="70.2" r="5.6" fill="#000"/>
<path d="M1428.2 75.6 L1430.7 77.8 L1433.2 75.6" fill="none" stroke="#777" stroke-width="0.8"/>
<!-- power -->
<path d="M1519.9 68.5 A9.2 9.2 0 1 0 1530.7 68.5" fill="none" stroke="#000" stroke-width="3.2" stroke-linecap="round"/>
<path d="M1525.3 65 L1525.3 74" stroke="#000" stroke-width="3.4" stroke-linecap="round"/>
<!-- bell -->
<path d="M1622.4 65.6 Q1629 66.3 1629 73.5 L1629.2 77.5 Q1629.6 80.8 1633 83.6 L1611.8 83.6 Q1615.2 80.8 1615.6 77.5 L1615.8 73.5 Q1615.8 66.3 1622.4 65.6 Z" fill="#000" stroke="#000" stroke-width="0.6" stroke-linejoin="round"/>
<circle cx="1622.4" cy="84.6" r="3" fill="#000"/>
</svg>

</body></html>
